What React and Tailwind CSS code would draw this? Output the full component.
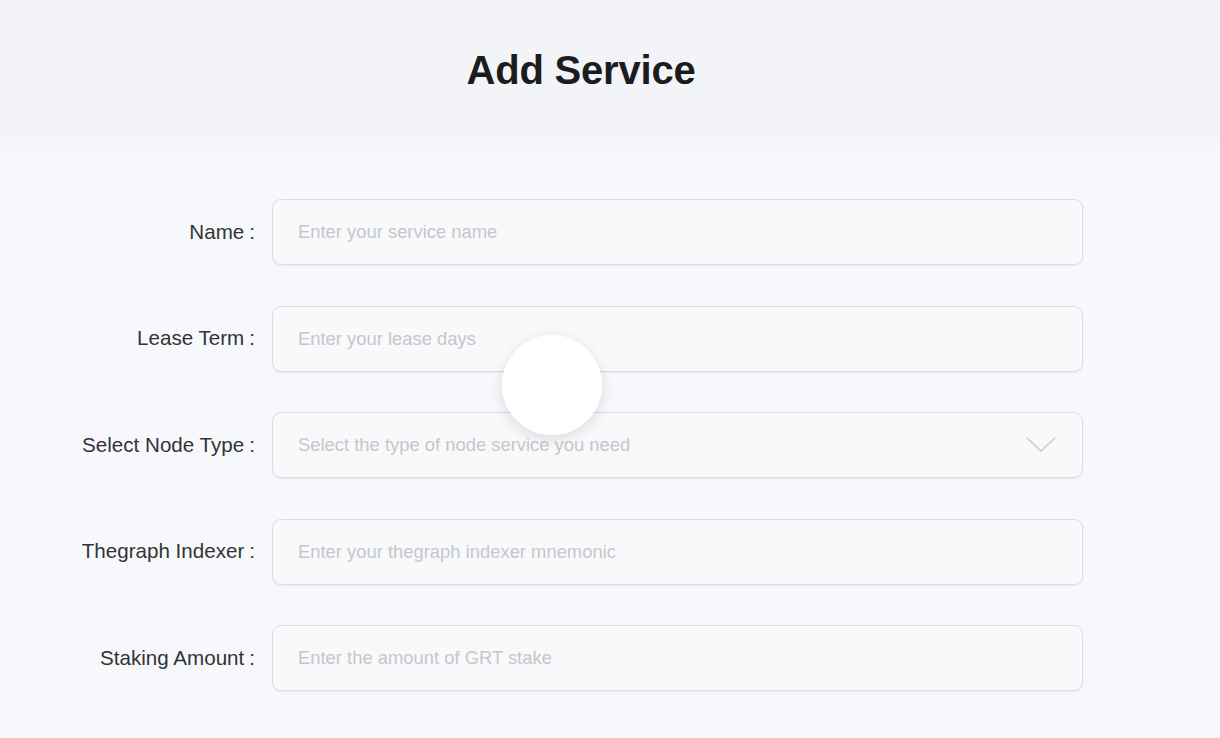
import { useState } from "react";

const fields = [
  { key: "name", label: "Name", placeholder: "Enter your service name" },
  { key: "lease", label: "Lease Term", placeholder: "Enter your lease days" },
  { key: "node", label: "Select Node Type", placeholder: "Select the type of node service you need", select: true },
  { key: "indexer", label: "Thegraph Indexer", placeholder: "Enter your thegraph indexer mnemonic" },
  { key: "stake", label: "Staking Amount", placeholder: "Enter the amount of GRT stake" },
];

const Chevron = () => (
  <svg width="32" height="18" viewBox="0 0 32 18" fill="none" className="shrink-0">
    <path d="M2 2 L16 15 L30 2" stroke="#c9cad0" strokeWidth="1.6" strokeLinecap="round" strokeLinejoin="round" />
  </svg>
);

const App = () => {
  const [form, setForm] = useState({});

  return (
    <div
      className="relative w-full min-h-[738px] bg-[#f7f8fb] overflow-hidden"
      style={{ fontFamily: '"Liberation Sans", Arial, sans-serif' }}
    >
      <div className="h-[140px] bg-[#f3f4f8] flex items-center justify-center pr-[58px]">
        <h1 className="text-[40px] leading-none font-bold text-[#1c1c1e] tracking-[-0.2px]">Add Service</h1>
      </div>
      <div className="h-[10px] bg-[#f5f6f9]" />

      <form className="pt-[49px] flex flex-col gap-[40.5px]">
        {fields.map((f) => (
          <div key={f.key} className="flex items-center">
            <label className="w-[255px] shrink-0 text-right text-[20.6px] text-[#333335]">
              {f.label}
              <span className="ml-[5px]">:</span>
            </label>
            <div className="ml-[17px] w-[811px] h-[66px] rounded-[9px] border-[1.5px] border-[#dcdde2] bg-[#f8f9fb] shadow-[0_1px_2px_rgba(0,0,0,0.06)] flex items-center pl-[25px] pr-[25px]">
              {f.select ? (
                <>
                  <div className="flex-1 text-[18.4px] text-[#c5c7cc]">{f.placeholder}</div>
                  <Chevron />
                </>
              ) : (
                <input
                  className="flex-1 bg-transparent outline-none text-[18.4px] text-[#333] placeholder:text-[#c5c7cc]"
                  placeholder={f.placeholder}
                  value={form[f.key] || ""}
                  onChange={(e) => setForm({ ...form, [f.key]: e.target.value })}
                />
              )}
            </div>
          </div>
        ))}
      </form>

      {/* touch indicator */}
      <div className="absolute left-[502px] top-[335px] w-[100px] h-[100px] rounded-full bg-white/95 shadow-[0_4px_14px_rgba(0,0,0,0.12)]" />
    </div>
  );
};

export default App;
